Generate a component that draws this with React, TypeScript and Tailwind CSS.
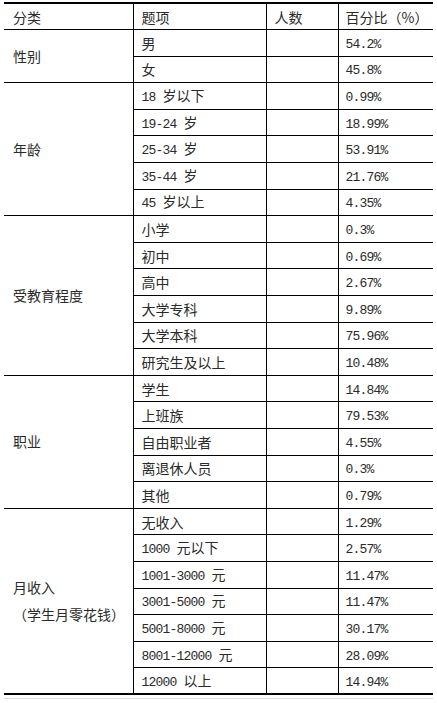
type Group = {
  label: string[];
  items: [string, string][];
};

const groups: Group[] = [
  {
    label: ["性别"],
    items: [
      ["男", "54.2%"],
      ["女", "45.8%"],
    ],
  },
  {
    label: ["年龄"],
    items: [
      ["18 岁以下", "0.99%"],
      ["19-24 岁", "18.99%"],
      ["25-34 岁", "53.91%"],
      ["35-44 岁", "21.76%"],
      ["45 岁以上", "4.35%"],
    ],
  },
  {
    label: ["受教育程度"],
    items: [
      ["小学", "0.3%"],
      ["初中", "0.69%"],
      ["高中", "2.67%"],
      ["大学专科", "9.89%"],
      ["大学本科", "75.96%"],
      ["研究生及以上", "10.48%"],
    ],
  },
  {
    label: ["职业"],
    items: [
      ["学生", "14.84%"],
      ["上班族", "79.53%"],
      ["自由职业者", "4.55%"],
      ["离退休人员", "0.3%"],
      ["其他", "0.79%"],
    ],
  },
  {
    label: ["月收入", "（学生月零花钱）"],
    items: [
      ["无收入", "1.29%"],
      ["1000 元以下", "2.57%"],
      ["1001-3000 元", "11.47%"],
      ["3001-5000 元", "11.47%"],
      ["5001-8000 元", "30.17%"],
      ["8001-12000 元", "28.09%"],
      ["12000 以上", "14.94%"],
    ],
  },
];

// digits and latin in a half-width mono face, like the SimSun original
function Mixed({ text }: { text: string }) {
  const parts = text.split(/([\x20-\x7e]+)/).filter(Boolean);
  return (
    <>
      {parts.map((p, i) =>
        /^[\x20-\x7e]+$/.test(p) ? (
          <span
            key={i}
            className="font-['Liberation_Mono',monospace] text-[13px] tracking-[-0.8px] whitespace-pre"
          >
            {p}
          </span>
        ) : (
          <span key={i}>{p}</span>
        )
      )}
    </>
  );
}

export default function App() {
  return (
    <div className="min-h-[703px] w-[437px] bg-white pt-[2px] pl-[4px] font-['Noto_Sans_CJK_SC',sans-serif] text-[14px] leading-none text-[#2a2a2a]">
      <table className="w-[429px] table-fixed border-collapse border-y-2 border-black">
        <colgroup>
          <col className="w-[129px]" />
          <col className="w-[133px]" />
          <col className="w-[72px]" />
          <col className="w-[95px]" />
        </colgroup>
        <thead>
          <tr className="h-[26.6px]">
            <th className="border-r border-b border-black pl-[9px] text-left font-normal">分类</th>
            <th className="border-r border-b border-black pl-[8px] text-left font-normal">题项</th>
            <th className="border-r border-b border-black pl-[8px] text-left font-normal">人数</th>
            <th className="border-b border-black pl-[7px] text-left font-normal">百分比（%）</th>
          </tr>
        </thead>
        <tbody>
          {groups.map((g) =>
            g.items.map(([item, pct], i) => (
              <tr key={g.label[0] + item} className="h-[26.6px]">
                {i === 0 && (
                  <td
                    rowSpan={g.items.length}
                    className="border-r border-b border-black pl-[9px] align-middle"
                  >
                    {g.label.map((l) => (
                      <div key={l} className="leading-[27px]">
                        {l}
                      </div>
                    ))}
                  </td>
                )}
                <td className="border-r border-b border-black pl-[8px]">
                  <Mixed text={item} />
                </td>
                <td className="border-r border-b border-black"></td>
                <td className="border-b border-black pl-[7px]">
                  <Mixed text={pct} />
                </td>
              </tr>
            ))
          )}
        </tbody>
      </table>
      <div className="mt-[3px] h-px w-[429px] bg-[#dcdcdc]" />
    </div>
  );
}
